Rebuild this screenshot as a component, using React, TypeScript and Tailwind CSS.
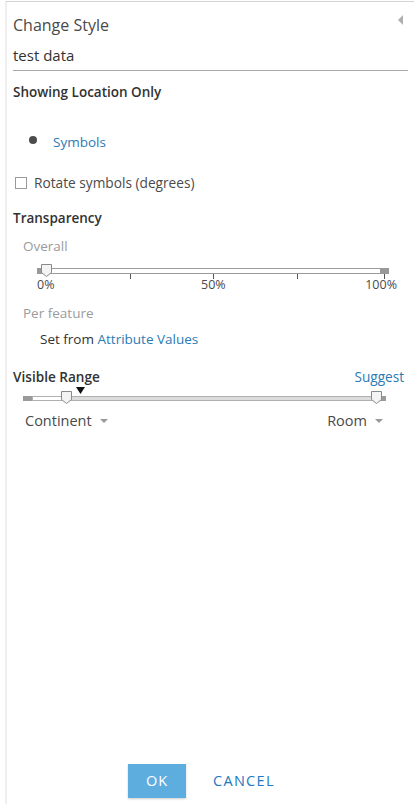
import React from "react";

const font = { fontFamily: "'Open Sans', Lato, sans-serif" };

export default function App() {
  return (
    <div className="w-[414px] h-[804px] bg-white pl-[5px] pt-[1px] overflow-hidden" style={font}>
      <div className="relative flex flex-col h-full border-l-2 border-t border-l-[#efefef] border-t-[#d4d4d4] pl-[6px] pr-[6px]">
        {/* collapse arrow */}
        <div className="absolute right-[11px] top-[13px] w-0 h-0 border-t-[5px] border-b-[5px] border-r-[5px] border-t-transparent border-b-transparent border-r-[#b0b0b0]" />
        <div className="pt-[13px] text-[16px] leading-[20px] text-[#4a4a4a]">Change Style</div>
        <div className="pt-[10px] pb-[5px] text-[15px] leading-[20px] text-[#323232] border-b border-[#a8a8a8]">test data</div>
        <div className="pt-[12px] text-[13.5px] leading-[18px] font-semibold text-[#323232]">Showing Location Only</div>

        <div className="pt-[32px] flex items-center">
          <div className="w-[8px] h-[8px] rounded-full bg-[#4c4c4c] ml-[16px] mt-[-4px]" />
          <div className="ml-[16px] text-[13.5px] leading-[18px] text-[#2b7bb5]">Symbols</div>
        </div>

        <div className="pt-[23px] flex items-center">
          <div className="w-[12px] h-[12px] border border-[#9a9a9a] bg-white ml-[2px]" />
          <div className="ml-[7px] text-[13.7px] leading-[18px] text-[#4a4a4a]">Rotate symbols (degrees)</div>
        </div>

        <div className="pt-[17px] text-[13.5px] leading-[18px] font-semibold text-[#323232]">Transparency</div>
        <div className="pt-[10px] pl-[10px] text-[13.5px] leading-[18px] text-[#9b9b9b]">Overall</div>

        {/* transparency slider */}
        <div className="relative mt-[9px] ml-[24px] w-[352px] h-[14px]">
          <div className="absolute left-0 top-[4px] w-[6px] h-[6px] bg-[#999]" />
          <div className="absolute left-[5px] right-[8px] top-[4px] h-[6px] border border-[#9a9a9a] bg-white" />
          <div className="absolute right-0 top-[4px] w-[9px] h-[6px] bg-[#999]" />
          <div className="absolute left-[93px] top-[10px] w-px h-[5px] bg-[#555]" />
          <div className="absolute left-[176px] top-[10px] w-px h-[5px] bg-[#555]" />
          <div className="absolute left-[260px] top-[10px] w-px h-[5px] bg-[#555]" />
          <div className="absolute right-[4px] top-[10px] w-px h-[5px] bg-[#555]" />
          <svg className="absolute left-[4px] top-0" width="11" height="13" viewBox="0 0 11 13">
            <path d="M0.5 0.5 H10.5 V8.5 L5.5 12.5 L0.5 8.5 Z" fill="#f4f4f4" stroke="#8a8a8a" />
          </svg>
        </div>
        <div className="relative ml-[24px] w-[360px] h-[16px] text-[12.5px] leading-[16px] text-[#4a4a4a] -mt-[1px]">
          <span className="absolute left-0 top-0">0%</span>
          <span className="absolute left-[164px] top-0">50%</span>
          <span className="absolute right-0 top-0">100%</span>
        </div>

        <div className="pt-[11px] pl-[10px] text-[13.5px] leading-[18px] text-[#9b9b9b]">Per feature</div>
        <div className="pt-[8px] pl-[27px] text-[13.5px] leading-[18px] text-[#323232]">
          Set from <span className="text-[#2b7bb5]">Attribute Values</span>
        </div>

        <div className="pt-[20px] flex items-center justify-between pr-[4px]">
          <span className="text-[13.6px] leading-[18px] font-semibold text-[#323232]">Visible Range</span>
          <span className="text-[13.6px] leading-[18px] text-[#2b7bb5]">Suggest</span>
        </div>

        {/* range slider */}
        <div className="relative mt-[2px] ml-[10px] w-[363px] h-[16px]">
          <div className="absolute left-0 top-[8px] w-[10px] h-[5px] bg-[#9a9a9a]" />
          <div className="absolute left-[9px] top-[8px] w-[40px] h-[5px] bg-white border border-[#b0b0b0]" />
          <div className="absolute left-[48px] right-[8px] top-[8px] h-[5px] bg-[#dcdcdc] border border-[#b0b0b0]" />
          <div className="absolute right-0 top-[8px] w-[9px] h-[5px] bg-[#9a9a9a]" />
          <svg className="absolute left-[53px] top-[-1px]" width="9" height="7" viewBox="0 0 9 7">
            <path d="M0 0 H9 L4.5 7 Z" fill="#111" />
          </svg>
          <svg className="absolute left-[38px] top-[3px]" width="11" height="13" viewBox="0 0 11 13">
            <path d="M0.5 0.5 H10.5 V8.5 L5.5 12.5 L0.5 8.5 Z" fill="#f4f4f4" stroke="#8a8a8a" />
          </svg>
          <svg className="absolute left-[348px] top-[3px]" width="11" height="13" viewBox="0 0 11 13">
            <path d="M0.5 0.5 H10.5 V8.5 L5.5 12.5 L0.5 8.5 Z" fill="#f4f4f4" stroke="#8a8a8a" />
          </svg>
        </div>
        <div className="mt-[7px] flex items-center justify-between pl-[12px] pr-[25px] text-[14.5px] leading-[20px] text-[#4a4a4a]">
          <span className="flex items-center">
            Continent
            <span className="ml-[8px] w-0 h-0 border-l-[4px] border-r-[4px] border-t-[4px] border-l-transparent border-r-transparent border-t-[#999]" />
          </span>
          <span className="flex items-center">
            Room
            <span className="ml-[8px] w-0 h-0 border-l-[4px] border-r-[4px] border-t-[4px] border-l-transparent border-r-transparent border-t-[#999]" />
          </span>
        </div>

        <div className="flex-1" />
        <div className="flex items-center pb-[6px] pl-[115px]">
          <button className="w-[58px] h-[34px] bg-[#5eaddf] text-white text-[14.5px] tracking-[1px] shadow-[0_1px_2px_rgba(0,0,0,0.2)]">OK</button>
          <button className="ml-[27px] text-[#1e78c2] text-[14.5px] tracking-[1.3px] bg-transparent">CANCEL</button>
        </div>
      </div>
    </div>
  );
}
